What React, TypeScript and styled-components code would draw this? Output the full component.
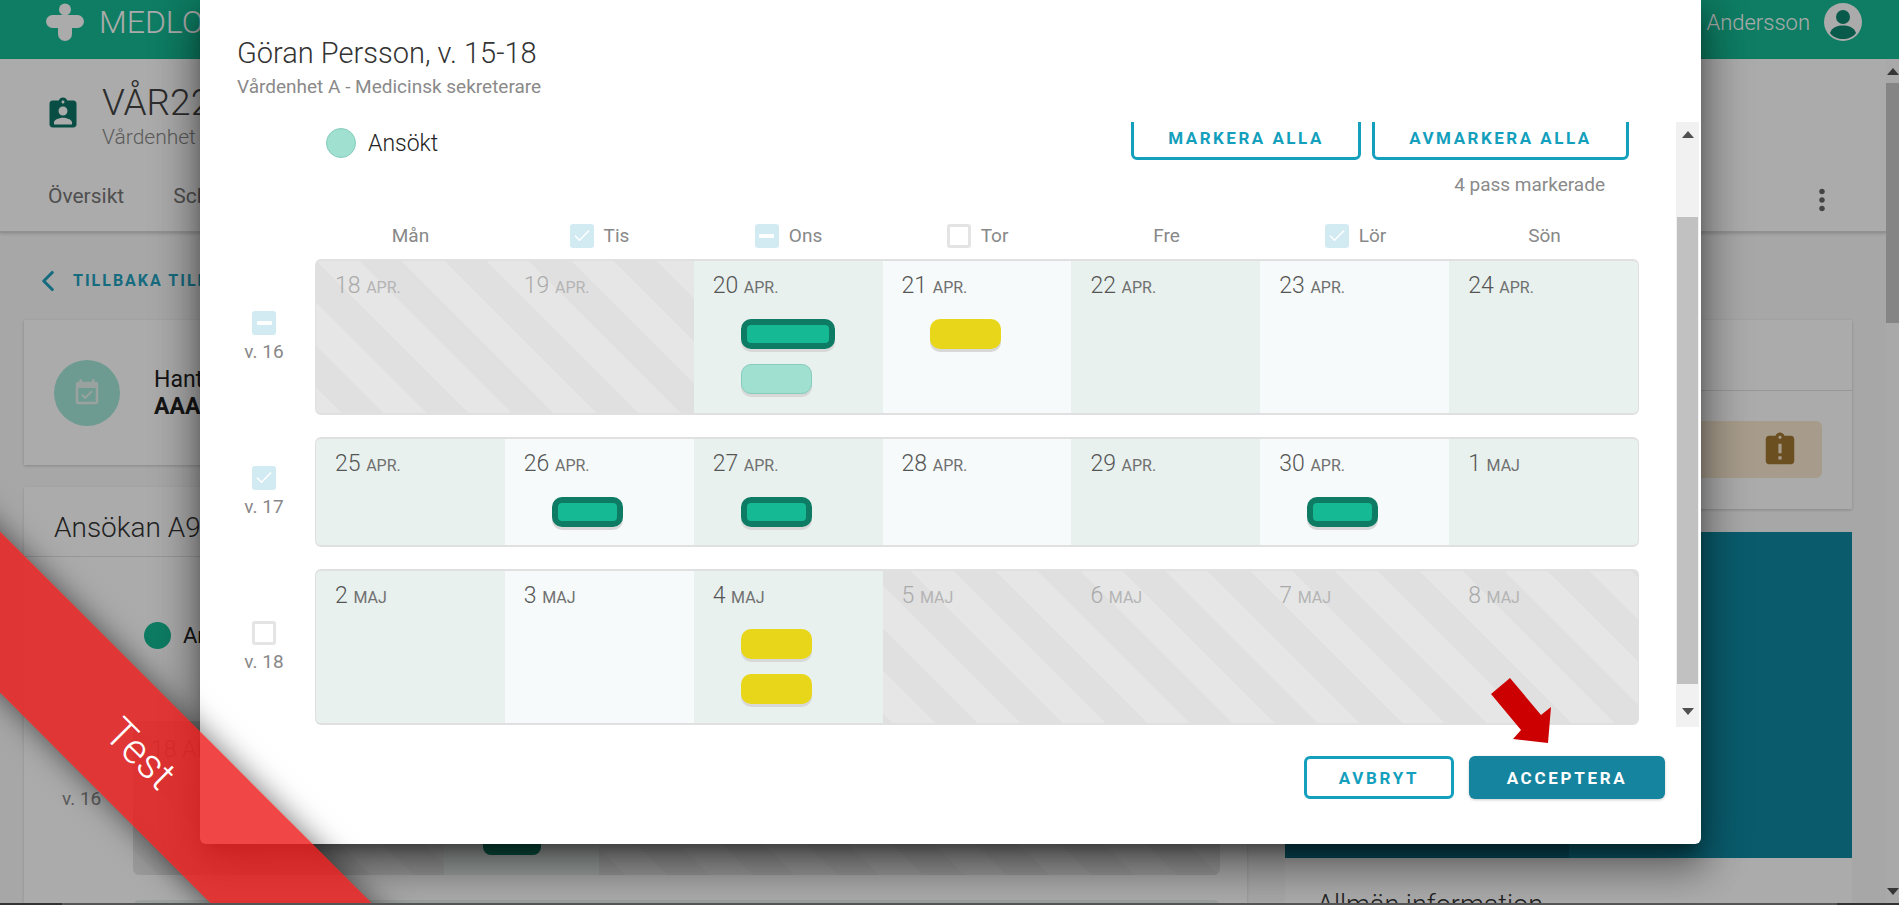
import styled, { createGlobalStyle, css } from "styled-components";
import { Check, ChevronLeft } from "lucide-react";
import { MdAssignmentInd, MdAssignmentLate, MdEventAvailable, MdMoreVert } from "react-icons/md";

type CheckState = "checked" | "partial" | "empty";
type ChipKind = "booked" | "applied" | "offered";

interface Chip {
  kind: ChipKind;
  wide?: boolean;
}

interface Day {
  num: number;
  month: string;
  off?: boolean;
  chips?: Chip[];
}

interface Week {
  label: string;
  state: CheckState;
  height: number;
  days: Day[];
}

const weekdays: { name: string; state?: CheckState }[] = [
  { name: "Mån" },
  { name: "Tis", state: "checked" },
  { name: "Ons", state: "partial" },
  { name: "Tor", state: "empty" },
  { name: "Fre" },
  { name: "Lör", state: "checked" },
  { name: "Sön" },
];

const weeks: Week[] = [
  {
    label: "v. 16",
    state: "partial",
    height: 156,
    days: [
      { num: 18, month: "APR.", off: true },
      { num: 19, month: "APR.", off: true },
      { num: 20, month: "APR.", chips: [{ kind: "booked", wide: true }, { kind: "applied" }] },
      { num: 21, month: "APR.", chips: [{ kind: "offered" }] },
      { num: 22, month: "APR." },
      { num: 23, month: "APR." },
      { num: 24, month: "APR." },
    ],
  },
  {
    label: "v. 17",
    state: "checked",
    height: 110,
    days: [
      { num: 25, month: "APR." },
      { num: 26, month: "APR.", chips: [{ kind: "booked" }] },
      { num: 27, month: "APR.", chips: [{ kind: "booked" }] },
      { num: 28, month: "APR." },
      { num: 29, month: "APR." },
      { num: 30, month: "APR.", chips: [{ kind: "booked" }] },
      { num: 1, month: "MAJ" },
    ],
  },
  {
    label: "v. 18",
    state: "empty",
    height: 156,
    days: [
      { num: 2, month: "MAJ" },
      { num: 3, month: "MAJ" },
      { num: 4, month: "MAJ", chips: [{ kind: "offered" }, { kind: "offered" }] },
      { num: 5, month: "MAJ", off: true },
      { num: 6, month: "MAJ", off: true },
      { num: 7, month: "MAJ", off: true },
      { num: 8, month: "MAJ", off: true },
    ],
  },
];

function CheckBox({ state }: { state: CheckState }) {
  return (
    <Box $state={state}>
      {state === "checked" && <Check size={20} color="#fff" strokeWidth={1.8} />}
      {state === "partial" && <MinusBar />}
    </Box>
  );
}

export default function App() {
  return (
    <Page>
      <GlobalStyle />
      <TopBar>
        <Brand>
          <svg width="38" height="38" viewBox="0 0 38 38">
            <circle cx="19" cy="6.500" r="6" fill="#ffffff" />
            <rect x="0" y="12" width="38" height="13" rx="6.500" fill="#ffffff" />
            <rect x="12" y="12" width="14" height="26" rx="7" fill="#ffffff" />
          </svg>
          MEDLO
        </Brand>
        <UserBox>
          Anna Andersson
          <svg width="38" height="38" viewBox="0 0 38 38">
            <circle cx="19" cy="19" r="19" fill="#fff" />
            <circle cx="19" cy="14" r="7" fill="#0f8770" />
            <path d="M6 30c2-6 8-7.500 13-7.500s11 1.500 13 7.500c-3 4-8 6-13 6s-10-2-13-6z" fill="#0f8770" />
          </svg>
        </UserBox>
      </TopBar>

      <Under>
        <Column>
          <SubHeader>
            <TitleRow>
              <MdAssignmentInd size={36} color="#0e7567" />
              <div>
                <PageTitle>VÅR22</PageTitle>
                <PageSub>Vårdenhet A</PageSub>
              </div>
            </TitleRow>
            <Tabs>
              <Tab>Översikt</Tab>
              <Tab>Schema</Tab>
              <TabMenu>
                <MdMoreVert size={34} color="#666" />
              </TabMenu>
            </Tabs>
          </SubHeader>

          <Content>
            <LeftSide>
              <BackLink>
                <ChevronLeft size={34} strokeWidth={2.2} />
                TILLBAKA TILL ANSÖKNINGAR
              </BackLink>
              <InfoCard>
                <RoundIcon>
                  <MdEventAvailable size={30} color="#e5f2ee" />
                </RoundIcon>
                <div>
                  <InfoTitle>Hantera</InfoTitle>
                  <InfoBold>AAA</InfoBold>
                </div>
              </InfoCard>
              <ApplyCard>
                <ApplyTitle>Ansökan A91</ApplyTitle>
                <ApplyBody>
                  <ApplyLegend>
                    <ApplyDot />
                    Ansökt
                  </ApplyLegend>
                  <ApplyDay>Mån</ApplyDay>
                  <ApplyWeek>
                    <ApplyWeekName>v. 16</ApplyWeekName>
                    <ApplyGrid>
                      <ApplyCell>
                        <ApplyDate>18 APR.</ApplyDate>
                      </ApplyCell>
                      <ApplyCell />
                      <ApplyCell $open>
                        <ApplyChip />
                      </ApplyCell>
                    </ApplyGrid>
                  </ApplyWeek>
                  <ApplyNextGrid />
                </ApplyBody>
              </ApplyCard>
            </LeftSide>
            <RightSide>
              <NoticeCard>
                <NoticeTop />
                <NoticeBody>
                  <NoticeBox>
                    <MdAssignmentLate size={38} color="#a07730" />
                  </NoticeBox>
                </NoticeBody>
              </NoticeCard>
              <PanelCard>
                <Panel />
                <PanelTitle>Allmän information</PanelTitle>
              </PanelCard>
            </RightSide>
          </Content>
        </Column>
        <PageScroll>
          <ScrollArrow />
          <PageThumb />
          <ScrollArrow $down />
        </PageScroll>
      </Under>

      <Backdrop />

      <Modal>
        <ModalHead>
          <ModalTitle>Göran Persson, v. 15-18</ModalTitle>
          <ModalSub>Vårdenhet A - Medicinsk sekreterare</ModalSub>
        </ModalHead>
        <ModalBody>
          <ScrollPane>
            <TopRow>
              <Legend>
                <LegendDot />
                Ansökt
              </Legend>
              <ButtonGroup>
                <TabButton $width={230}>Markera alla</TabButton>
                <TabButton $width={257}>Avmarkera alla</TabButton>
              </ButtonGroup>
            </TopRow>
            <CountRow>4 pass markerade</CountRow>
            <DayHeader>
              {weekdays.map((d) => (
                <DayName key={d.name}>
                  {d.state && <CheckBox state={d.state} />}
                  {d.name}
                </DayName>
              ))}
            </DayHeader>
            {weeks.map((week) => (
              <WeekRow key={week.label}>
                <WeekLabel>
                  <CheckBox state={week.state} />
                  {week.label}
                </WeekLabel>
                <WeekBox $height={week.height}>
                  {week.days.map((day, i) => (
                    <DayCell key={day.num} $off={day.off} $odd={i % 2 === 0}>
                      <DateText $off={day.off}>
                        {day.num} <small>{day.month}</small>
                      </DateText>
                      {day.chips?.map((chip, c) => (
                        <ShiftChip key={c} $kind={chip.kind} $wide={chip.wide} />
                      ))}
                    </DayCell>
                  ))}
                </WeekBox>
              </WeekRow>
            ))}
          </ScrollPane>
          <ModalScroll>
            <ScrollArrow />
            <ModalThumb />
            <ScrollArrow $down />
          </ModalScroll>
        </ModalBody>
        <ModalFoot>
          <FootButton>Avbryt</FootButton>
          <FootButton $primary>Acceptera</FootButton>
        </ModalFoot>
      </Modal>

      <HintArrow width="62" height="66" viewBox="0 0 62 66">
        <polygon points="19,0 0,16 30,52 22,61 57,65 60,29 50,37" fill="#cc0000" />
      </HintArrow>

      <Ribbon>Test</Ribbon>
      <BottomStrip />
    </Page>
  );
}

const offStripes = css`
  background: repeating-linear-gradient(
    45deg,
    #e6e6e6 0 18px,
    #e0e0e0 18px 48px,
    #e6e6e6 48px 60px
  );
`;

const GlobalStyle = createGlobalStyle`
  html, body {
    margin: 0;
    padding: 0;
    overflow: hidden;
  }

  * {
    box-sizing: border-box;
  }
`;

const Page = styled.div`
  position: relative;
  width: 1899px;
  height: 905px;
  overflow: hidden;
  background: #fafafa;
  font-family: Roboto, "Liberation Sans", sans-serif;
`;

const TopBar = styled.div`
  height: 59px;
  background: #16bb94;
  display: flex;
  align-items: center;
  justify-content: space-between;
  padding: 0 37px 15px 46px;
  color: #fff;
`;

const Brand = styled.div`
  display: flex;
  align-items: center;
  gap: 15px;
  font-size: 32px;
  font-weight: 300;
`;

const UserBox = styled.div`
  display: flex;
  align-items: center;
  gap: 14px;
  font-size: 22px;
  font-weight: 300;
`;

const Under = styled.div`
  display: flex;
  height: 846px;
`;

const Column = styled.div`
  flex: 1;
  min-width: 0;
`;

const SubHeader = styled.div`
  height: 174px;
  background: #fff;
  border-bottom: 2px solid #d8d8d8;
  box-shadow: 0 1px 3px rgba(0, 0, 0, 0.15);
  padding: 22px 0 0 48px;
`;

const TitleRow = styled.div`
  display: flex;
  align-items: flex-start;
  gap: 21px;
  height: 101px;

  svg {
    margin-top: 15px;
    margin-left: -3px;
  }
`;

const PageTitle = styled.div`
  font-size: 37px;
  font-weight: 300;
  line-height: 44px;
  color: #444;
`;

const PageSub = styled.div`
  font-size: 21px;
  font-weight: 300;
  line-height: 24px;
  color: #888;
`;

const Tabs = styled.div`
  display: flex;
  align-items: flex-start;
  gap: 49px;
  padding-right: 47px;
  font-size: 21px;
  color: #777;
`;

const Tab = styled.div`
  line-height: 28px;
`;

const TabMenu = styled.div`
  margin-left: auto;
  margin-top: 1px;
  display: flex;
`;

const Content = styled.div`
  display: flex;
  gap: 38px;
  padding: 0 34px 0 24px;
`;

const LeftSide = styled.div`
  width: 1223px;
`;

const BackLink = styled.div`
  height: 87px;
  display: flex;
  align-items: center;
  gap: 8px;
  padding: 8px 0 0 7px;
  font-size: 16px;
  font-weight: 700;
  letter-spacing: 2px;
  color: #21a0bd;
`;

const InfoCard = styled.div`
  height: 145px;
  background: #fff;
  display: flex;
  align-items: center;
  gap: 34px;
  padding-left: 30px;
  box-shadow: 0 1px 3px rgba(0, 0, 0, 0.2);
`;

const RoundIcon = styled.div`
  width: 66px;
  height: 66px;
  border-radius: 50%;
  background: #a5e7d8;
  display: flex;
  align-items: center;
  justify-content: center;
`;

const InfoTitle = styled.div`
  font-size: 23px;
  color: #222;
`;

const InfoBold = styled.div`
  font-size: 23px;
  font-weight: 700;
  color: #222;
`;

const ApplyCard = styled.div`
  margin-top: 22px;
  background: #fff;
  height: 500px;
  box-shadow: 0 1px 3px rgba(0, 0, 0, 0.15);
`;

const ApplyTitle = styled.div`
  height: 70px;
  border-bottom: 1px solid #e2e2e2;
  padding: 0 30px;
  font-size: 28px;
  font-weight: 300;
  line-height: 82px;
  color: #333;
`;

const ApplyBody = styled.div`
  padding: 65px 0 0 38px;
`;

const ApplyLegend = styled.div`
  display: flex;
  align-items: center;
  gap: 12px;
  margin-left: 82px;
  font-size: 22px;
  color: #222;
`;

const ApplyDot = styled.div`
  width: 27px;
  height: 27px;
  border-radius: 50%;
  background: #16bb94;
`;

const ApplyDay = styled.div`
  margin: 38px 0 12px 157px;
  font-size: 19px;
  line-height: 22px;
  color: #777;
`;

const ApplyWeek = styled.div`
  display: flex;
  align-items: center;
`;

const ApplyWeekName = styled.div`
  width: 71px;
  font-size: 19px;
  color: #888;
`;

const ApplyGrid = styled.div`
  width: 1087px;
  height: 154px;
  border-radius: 6px;
  display: grid;
  grid-template-columns: repeat(7, 155.3px);
  ${offStripes}
`;

const ApplyNextGrid = styled.div`
  width: 1087px;
  height: 154px;
  margin: 25px 0 0 71px;
  border-radius: 6px;
  background: #e8f1ee;
`;

const ApplyCell = styled.div<{ $open?: boolean }>`
  background: ${(p) => (p.$open ? "#e8f1ee" : "transparent")};
  padding: 15px 18px;
`;

const ApplyDate = styled.div`
  font-size: 23px;
  font-weight: 300;
  color: #aaa;
`;

const ApplyChip = styled.div`
  width: 58px;
  height: 30px;
  margin: 89px 0 0 21px;
  border-radius: 8px;
  background: #0e7c64;
`;

const RightSide = styled.div`
  width: 567px;
  padding-top: 87px;
`;

const NoticeCard = styled.div`
  height: 189px;
  background: #fff;
  box-shadow: 0 1px 3px rgba(0, 0, 0, 0.2);
`;

const NoticeTop = styled.div`
  height: 71px;
  border-bottom: 1px solid #e2e2e2;
`;

const NoticeBody = styled.div`
  padding: 30px 30px 0 0;
`;

const NoticeBox = styled.div`
  height: 57px;
  border-radius: 6px;
  background: #f9e9cf;
  display: flex;
  align-items: center;
  justify-content: flex-end;
  padding-right: 23px;
`;

const PanelCard = styled.div`
  margin-top: 23px;
  background: #fff;
  height: 420px;
`;

const Panel = styled.div`
  height: 326px;
  background: linear-gradient(90deg, #0c7289 0 284px, #108aa3 284px 100%);
`;

const PanelTitle = styled.div`
  padding: 31px 0 0 32px;
  font-size: 27px;
  font-weight: 300;
  line-height: 32px;
  color: #333;
`;

const PageScroll = styled.div`
  width: 13px;
  background: #fcfcfc;
  display: flex;
  flex-direction: column;
  align-items: center;
  padding: 9px 0 10px;
`;

const PageThumb = styled.div`
  width: 13px;
  height: 240px;
  margin-top: 8px;
  margin-bottom: auto;
  background: #c6c6c6;
`;

const ScrollArrow = styled.div<{ $down?: boolean }>`
  width: 0;
  height: 0;
  flex: none;
  border-left: 6px solid transparent;
  border-right: 6px solid transparent;
  ${(p) =>
    p.$down
      ? css`
          border-top: 7px solid #505050;
        `
      : css`
          border-bottom: 7px solid #505050;
        `}
`;

const Backdrop = styled.div`
  position: absolute;
  inset: 0;
  background: rgba(0, 0, 0, 0.33);
`;

const Modal = styled.div`
  position: absolute;
  left: 200px;
  top: 0;
  width: 1501px;
  height: 844px;
  display: flex;
  flex-direction: column;
  background: #fff;
  border-radius: 0 0 6px 6px;
  box-shadow: 0 11px 15px -7px rgba(0, 0, 0, 0.4), 0 24px 38px 3px rgba(0, 0, 0, 0.28),
    0 9px 46px 8px rgba(0, 0, 0, 0.24);
`;

const ModalHead = styled.div`
  height: 122px;
  flex: none;
  padding: 37px 0 0 37px;
`;

const ModalTitle = styled.div`
  font-size: 29px;
  font-weight: 300;
  line-height: 33px;
  color: #333;
`;

const ModalSub = styled.div`
  margin-top: 6px;
  font-size: 19px;
  font-weight: 400;
  line-height: 22px;
  color: #8a8a8a;
`;

const ModalBody = styled.div`
  height: 605px;
  flex: none;
  display: flex;
  overflow: hidden;
`;

const ScrollPane = styled.div`
  flex: 1;
  min-width: 0;
  margin-top: -6px;
`;

const TopRow = styled.div`
  height: 44px;
  display: flex;
  justify-content: space-between;
  padding: 0 47px 0 126px;
`;

const Legend = styled.div`
  display: flex;
  align-items: center;
  gap: 12px;
  height: 30px;
  margin-top: 12px;
  font-size: 23px;
  font-weight: 300;
  color: #222;
`;

const LegendDot = styled.div`
  width: 30px;
  height: 30px;
  border-radius: 50%;
  background: #9fe0d0;
  border: 1px solid #86ccbc;
`;

const ButtonGroup = styled.div`
  display: flex;
  gap: 11px;
`;

const TabButton = styled.button<{ $width: number }>`
  width: ${(p) => p.$width}px;
  height: 44px;
  background: #fff;
  border: 3px solid #149fbd;
  border-radius: 6px;
  color: #149fbd;
  font-family: inherit;
  font-size: 17px;
  font-weight: 700;
  letter-spacing: 2.5px;
  text-transform: uppercase;
`;

const CountRow = styled.div`
  height: 50px;
  padding-right: 71px;
  text-align: right;
  font-size: 19px;
  line-height: 50px;
  color: #8a8a8a;
`;

const DayHeader = styled.div`
  display: grid;
  grid-template-columns: repeat(7, 189px);
  height: 24px;
  margin: 14px 0 11px 116px;
`;

const DayName = styled.div`
  display: flex;
  align-items: center;
  justify-content: center;
  gap: 10px;
  font-size: 19px;
  line-height: 22px;
  color: #888;
`;

const Box = styled.div<{ $state: CheckState }>`
  width: 24px;
  height: 24px;
  flex: none;
  border-radius: 3px;
  display: flex;
  align-items: center;
  justify-content: center;
  background: ${(p) => (p.$state === "empty" ? "#fff" : "#d2ebf2")};
  border: ${(p) => (p.$state === "empty" ? "3px solid #e4e4e4" : "none")};
`;

const MinusBar = styled.div`
  width: 15px;
  height: 4px;
  border-radius: 1px;
  background: #fff;
`;

const WeekRow = styled.div`
  display: flex;
  align-items: center;
  gap: 24px;
  padding-left: 37px;
  margin-bottom: 22px;
`;

const WeekLabel = styled.div`
  width: 54px;
  display: flex;
  flex-direction: column;
  align-items: center;
  gap: 6px;
  font-size: 19px;
  line-height: 22px;
  color: #888;
`;

const WeekBox = styled.div<{ $height: number }>`
  width: 1324px;
  height: ${(p) => p.$height}px;
  display: grid;
  grid-template-columns: repeat(7, 1fr);
  border: 1px solid #e0e0e0;
  border-top-width: 2px;
  border-bottom-width: 2px;
  border-radius: 6px;
  overflow: hidden;
  ${offStripes}
`;

const DayCell = styled.div<{ $off?: boolean; $odd: boolean }>`
  padding: 11px 18px 0 19px;
  background: ${(p) => (p.$off ? "transparent" : p.$odd ? "#e8f1ee" : "#f6fafa")};
`;

const DateText = styled.div<{ $off?: boolean }>`
  height: 28px;
  margin-bottom: 19px;
  font-size: 23px;
  font-weight: 300;
  line-height: 28px;
  color: ${(p) => (p.$off ? "#aaa" : "#555")};

  small {
    font-size: 16px;
    font-weight: 400;
    color: ${(p) => (p.$off ? "#b4b4b4" : "#707070")};
  }
`;

const chipLook = {
  booked: css`
    background: #15b994;
    border: 6px solid #0e7c64;
  `,
  applied: css`
    background: #9fe0d0;
    border: 1px solid #86ccbc;
  `,
  offered: css`
    background: #e8d61a;
  `,
};

const ShiftChip = styled.div<{ $kind: ChipKind; $wide?: boolean }>`
  width: ${(p) => (p.$wide ? 94 : 71)}px;
  height: 30px;
  margin: 0 0 15px 28px;
  border-radius: 10px;
  box-shadow: 0 3px 0 #d8d8d8;
  ${(p) => chipLook[p.$kind]}
`;

const ModalScroll = styled.div`
  width: 25px;
  flex: none;
  background: #f1f1f1;
  border-right: 2px solid #fff;
  display: flex;
  flex-direction: column;
  align-items: center;
  padding-top: 9px;
`;

const ModalThumb = styled.div`
  width: 21px;
  height: 467px;
  margin: 79px 0 24px;
  background: #c1c1c1;
`;

const ModalFoot = styled.div`
  flex: 1;
  display: flex;
  justify-content: flex-end;
  gap: 15px;
  padding: 29px 36px 0 0;
`;

const FootButton = styled.button<{ $primary?: boolean }>`
  width: ${(p) => (p.$primary ? 196 : 150)}px;
  height: 43px;
  border-radius: 6px;
  border: ${(p) => (p.$primary ? "none" : "3px solid #149fbd")};
  background: ${(p) => (p.$primary ? "#15849f" : "#fff")};
  color: ${(p) => (p.$primary ? "#fff" : "#149fbd")};
  box-shadow: ${(p) => (p.$primary ? "0 1px 3px rgba(0, 0, 0, 0.2)" : "none")};
  font-family: inherit;
  font-size: 17px;
  font-weight: 700;
  letter-spacing: 2.7px;
  text-transform: uppercase;
`;

const HintArrow = styled.svg`
  position: absolute;
  left: 1491px;
  top: 678px;
`;

const Ribbon = styled.div`
  position: absolute;
  left: -259px;
  top: 696px;
  width: 800px;
  height: 114px;
  transform: rotate(45deg);
  display: flex;
  align-items: center;
  justify-content: center;
  background: rgba(237, 27, 27, 0.81);
  box-shadow: 0 0 30px rgba(0, 0, 0, 0.55);
  color: #fff;
  font-size: 42px;
  font-weight: 300;
`;

const BottomStrip = styled.div`
  position: absolute;
  left: 0;
  right: 0;
  bottom: 0;
  height: 2px;
  background: linear-gradient(90deg, #333 0 62px, #555 62px 1837px, #333 1837px 100%);
`;
